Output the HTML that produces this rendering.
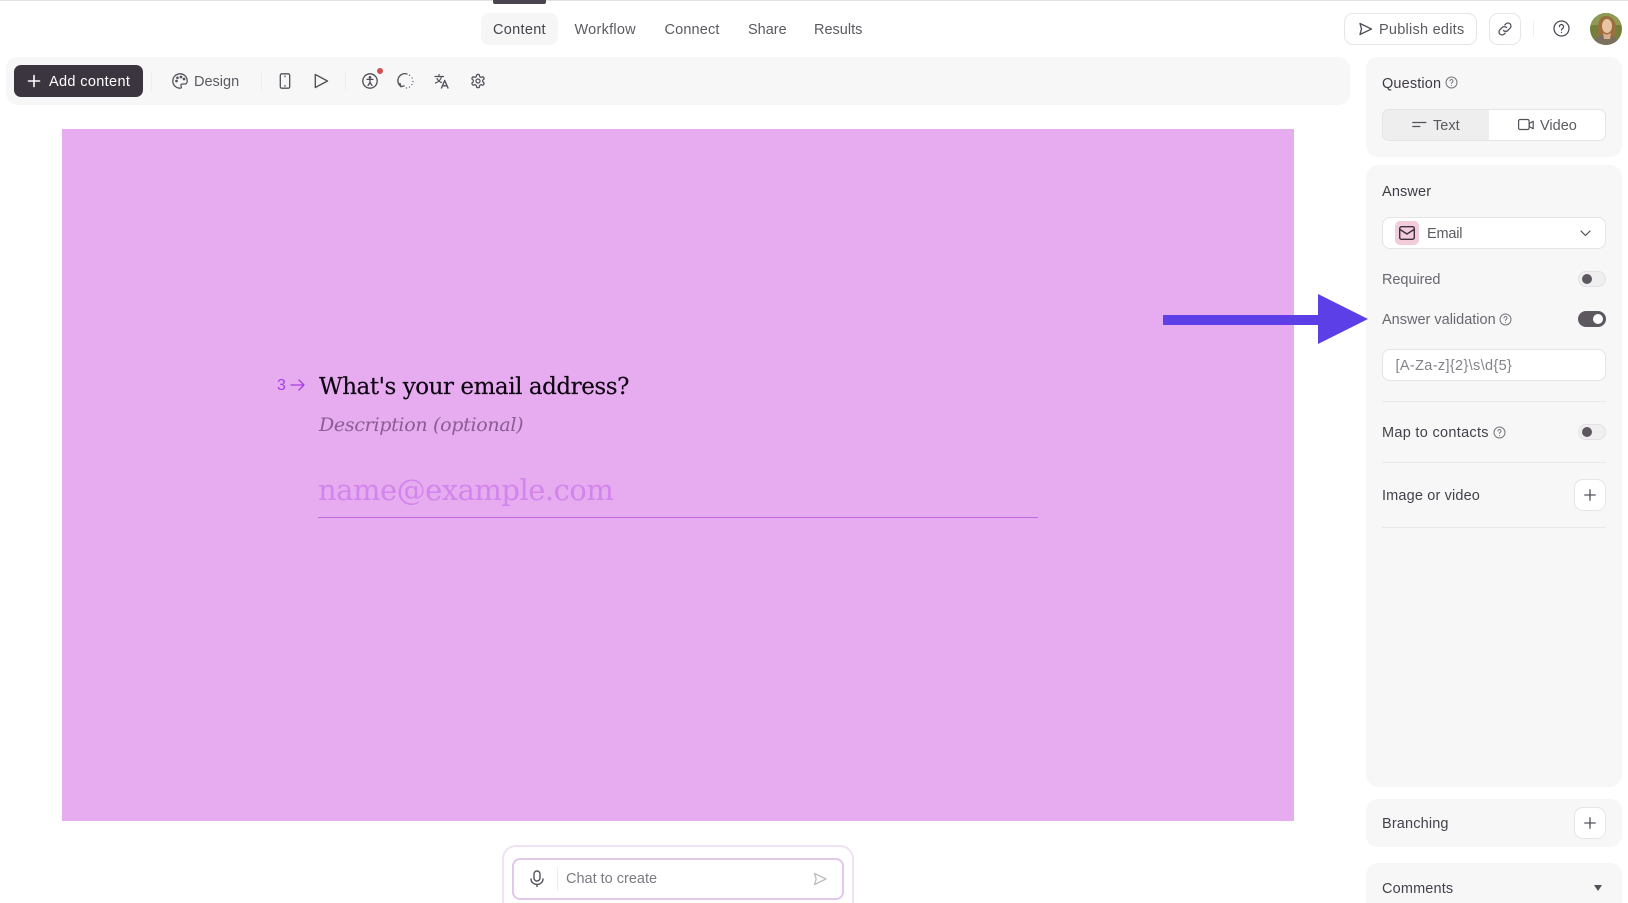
<!DOCTYPE html>
<html><head><meta charset="utf-8">
<style>
html{margin:0;padding:0;background:#fff;width:1628px;height:903px;overflow:hidden}
body{margin:0;padding:0;background:#fff;width:1628px;height:903px;position:relative;overflow:hidden;font-family:"Liberation Sans",sans-serif;color:#4a4650}
.a{position:absolute}
.t{position:absolute;white-space:nowrap;line-height:20px;font-size:14.5px;margin-top:1px}
svg{position:absolute;overflow:visible;fill:none}
.panel{position:absolute;background:#f7f7f8;border-radius:12px}
.sep{position:absolute;width:1px;height:20px;background:#eeeeef}
.hr{position:absolute;left:1382px;width:224px;height:1px;background:#e8e8ea}
.tog{position:absolute;left:1578px;width:28px;height:16px;border-radius:8px;box-sizing:border-box;background:#efeff0;border:1px solid #e2e2e4}
.tog i{position:absolute;left:3px;top:2px;width:10px;height:10px;border-radius:50%;background:#5d5860}
.btn{position:absolute;left:1574px;width:32px;height:32px;box-sizing:border-box;border:1px solid #e6e6e8;border-radius:9px;background:#fff}
.s{letter-spacing:.15px}
</style></head><body>
<div class="a" style="left:0;top:0;width:1628px;height:1px;background:#dfe3e3"></div>
<div class="a" style="left:493px;top:0;width:53px;height:4px;background:#4a4450;border-radius:0 0 2px 2px"></div>
<div class="a" style="left:481px;top:13px;width:77px;height:32px;background:#f6f6f7;border-radius:8px"></div>
<div class="t" style="left:493px;top:19px;color:#47434c;letter-spacing:.3px">Content</div>
<div class="t" style="left:574.5px;top:19px;color:#5c5960;letter-spacing:.25px">Workflow</div>
<div class="t" style="left:664.500px;top:19px;color:#5c5960;letter-spacing:.15px">Connect</div>
<div class="t" style="left:748px;top:19px;color:#5c5960">Share</div>
<div class="t" style="left:814px;top:19px;color:#5c5960">Results</div>

<div class="a" style="left:1344px;top:13px;width:133px;height:32px;box-sizing:border-box;border:1px solid #e6e6e8;border-radius:9px"></div>
<svg style="left:1358px;top:22px" width="15" height="14" stroke="#55515a" stroke-width="1.400" stroke-linejoin="round"><path d="M2 1.500L13.500 7 2 12.500 3.500 7z"/></svg>
<div class="t" style="left:1379px;top:19px;color:#5c5960;letter-spacing:.25px">Publish edits</div>
<div class="a" style="left:1489px;top:13px;width:32px;height:32px;box-sizing:border-box;border:1px solid #e6e6e8;border-radius:9px"></div>
<svg style="left:1497px;top:21px" width="16" height="16" stroke="#55515a" stroke-width="1.300" stroke-linecap="round"><path d="M6.500 9.500a3 3 0 0 0 4.300 0l2.300-2.300a3 3 0 0 0-4.300-4.300L7.800 3.900M9.500 6.500a3 3 0 0 0-4.300 0L2.900 8.800a3 3 0 0 0 4.300 4.300l1-1"/></svg>
<div class="sep" style="left:1533px;top:21px;height:16px"></div>
<svg style="left:1553px;top:20px" width="17" height="17" stroke="#4f4b54" stroke-width="1.300" stroke-linecap="round"><circle cx="8.500" cy="8.500" r="7.500"/><path d="M6.400 6.600a2.100 2.100 0 1 1 3.200 1.800c-.7.400-1.100.8-1.100 1.600M8.500 12.400v.1"/></svg>
<svg style="left:1590px;top:13px" width="32" height="32" viewBox="0 0 32 32"><defs><clipPath id="c"><circle cx="16" cy="16" r="16"/></clipPath></defs><g clip-path="url(#c)"><rect width="32" height="32" fill="#74803a"/><path d="M0 0h32v12H0z" fill="#8f9a55"/><path d="M8 28V13Q9 3 16 3q8 0 10 10v15z" fill="#9a6f3c"/><ellipse cx="17" cy="13" rx="5" ry="7" fill="#e9c4a2"/><path d="M3 32q1-10 13-11 12 1 13 11z" fill="#7d6f5e"/><path d="M13 20q4 3 8 0l-1 6h-6z" fill="#dcae8a"/></g></svg>

<div class="panel" style="left:6px;top:57px;width:1344px;height:48px"></div>
<div class="a" style="left:14px;top:65px;width:129px;height:32px;background:#3b3540;border-radius:7px"></div>
<svg style="left:27px;top:74px" width="14" height="14" stroke="#fff" stroke-width="1.600" stroke-linecap="round"><path d="M7 1.500v11M1.500 7h11"/></svg>
<div class="t" style="left:49px;top:71px;color:#fff;letter-spacing:.35px">Add content</div>
<div class="sep" style="left:151px;top:71px"></div>
<svg style="left:172px;top:73px" width="16" height="16" stroke="#55515a" stroke-width="1.300"><path d="M8 .8a7.200 7.200 0 1 0 0 14.400c1.500 0 1.600-1.200 1.100-2-.6-1 0-2.200 1.300-2.200h2.300c1.400 0 2.500-1 2.500-2.800C15.200 3.800 12 .8 8 .8z"/><circle cx="4.500" cy="8" r=".7"/><circle cx="5.500" cy="4.800" r=".7"/><circle cx="9" cy="4" r=".7"/><circle cx="12" cy="6" r=".7"/></svg>
<div class="t" style="left:194px;top:71px;color:#5c5960">Design</div>
<div class="sep" style="left:261px;top:71px"></div>
<svg style="left:277px;top:73px" width="16" height="16" stroke="#55515a" stroke-width="1.300"><rect x="3.300" y=".8" width="9.400" height="14.400" rx="1.500"/><path d="M8 3v.6M8 12.500v.6" stroke-linecap="round"/></svg>
<svg style="left:313px;top:73px" width="16" height="16" stroke="#55515a" stroke-width="1.400" stroke-linejoin="round"><path d="M2.300 1.500v13L14.500 8z"/></svg>
<div class="sep" style="left:345px;top:71px"></div>
<svg style="left:362px;top:73px" width="16" height="16" stroke="#4f4b54" stroke-width="1.300" stroke-linecap="round"><circle cx="8" cy="8" r="7.200"/><circle cx="8" cy="4.400" r=".7" fill="#4f4b54"/><path d="M5 6.400h6M8 6.500v3M8 9.500l-2 3M8 9.500l2 3"/></svg>
<div class="a" style="left:377px;top:68px;width:6px;height:6px;border-radius:50%;background:#d0524f"></div>
<svg style="left:398px;top:73px" width="16" height="16" stroke="#55515a" stroke-width="1.300" stroke-linecap="round"><path d="M3 13.500A7 7 0 0 1 9 1"/><path d="M11.500 2.200l.1.1M14 5l.1.1M15 8.500v.1M14 11.500l-.1.100M11.500 14l-.1.100M8.500 15h-.1" stroke-width="1.200"/><path d="M2 10.500l1 3.200 3.200-.8"/></svg>
<svg style="left:434px;top:73px" width="16" height="16" stroke="#55515a" stroke-width="1.200" stroke-linecap="round" stroke-linejoin="round"><path d="M1 3.500h8.500M5 1.500v2M7.500 3.500C7 6.500 4.500 9 1.500 10M3 5.500c1 2 3 3.500 4.500 4"/><path d="M7.500 15l3.200-7.500 3.300 7.500M8.700 12.800h4.200" stroke-width="1.400"/></svg>
<svg style="left:470px;top:73px" width="16" height="16" viewBox="0 0 24 24" stroke="#55515a" stroke-width="1.900" stroke-linejoin="round"><path d="M12.220 2h-.44a2 2 0 0 0-2 2v.18a2 2 0 0 1-1 1.730l-.43.250a2 2 0 0 1-2 0l-.15-.08a2 2 0 0 0-2.730.730l-.22.380a2 2 0 0 0 .730 2.730l.15.100a2 2 0 0 1 1 1.720v.510a2 2 0 0 1-1 1.740l-.15.090a2 2 0 0 0-.730 2.730l.22.380a2 2 0 0 0 2.730.730l.15-.08a2 2 0 0 1 2 0l.43.250a2 2 0 0 1 1 1.730V20a2 2 0 0 0 2 2h.44a2 2 0 0 0 2-2v-.18a2 2 0 0 1 1-1.730l.43-.25a2 2 0 0 1 2 0l.15.08a2 2 0 0 0 2.730-.73l.22-.39a2 2 0 0 0-.73-2.730l-.15-.08a2 2 0 0 1-1-1.740v-.5a2 2 0 0 1 1-1.740l.15-.09a2 2 0 0 0 .73-2.730l-.22-.38a2 2 0 0 0-2.730-.73l-.15.08a2 2 0 0 1-2 0l-.43-.25a2 2 0 0 1-1-1.730V4a2 2 0 0 0-2-2z"/><circle cx="12" cy="12" r="3"/></svg>

<div class="a" style="left:62px;top:128.500px;width:1231.500px;height:692.500px;background:#e7abef"></div>
<div class="t" style="left:277px;top:375px;font-size:16px;color:#a340e0">3</div>
<svg style="left:290px;top:378px" width="16" height="14" stroke="#a340e0" stroke-width="1.300" stroke-linecap="round" stroke-linejoin="round"><path d="M1 7h13M9 2l5 5-5 5"/></svg>
<div class="t" style="left:319px;top:370px;line-height:32px;font-family:'DejaVu Serif',serif;font-size:23px;color:#0b0410;-webkit-text-stroke:.15px #0b0410;letter-spacing:-.45px">What's your email address?</div>
<div class="t" style="left:319px;top:411px;line-height:26px;font-family:'DejaVu Serif',serif;font-style:italic;font-size:19px;color:#8a5c93;letter-spacing:-.3px">Description (optional)</div>
<div class="t" style="left:318px;top:469px;line-height:40px;font-family:'DejaVu Serif',serif;font-size:29px;color:#d285ec;letter-spacing:-.5px">name@example.com</div>
<div class="a" style="left:318px;top:517px;width:720px;height:1px;background:#c06ce2"></div>

<div class="a" style="left:502px;top:845px;width:352px;height:80px;box-sizing:border-box;border:2px solid #f0e2f4;border-radius:14px"></div>
<div class="a" style="left:512px;top:858px;width:332px;height:42px;box-sizing:border-box;border:2px solid #e2c8ea;border-radius:8px;background:#fff"></div>
<svg style="left:529px;top:870px" width="16" height="18" stroke="#55515a" stroke-width="1.400" stroke-linecap="round"><rect x="5" y="1" width="6" height="10" rx="3"/><path d="M2 9a6 5.500 0 0 0 12 0M8 14.500v2"/></svg>
<div class="a" style="left:557px;top:867px;width:1px;height:24px;background:#ececee"></div>
<div class="t" style="left:566px;top:868px;color:#7d7a82">Chat to create</div>
<svg style="left:813px;top:872px" width="14" height="14" stroke="#bdbcc0" stroke-width="1.300" stroke-linejoin="round"><path d="M1.500 1.500L13 7 1.500 12.500 3.200 7z"/></svg>

<div class="panel" style="left:1366px;top:57px;width:256px;height:100px"></div>
<div class="t s" style="left:1382px;top:73px;color:#3f3b44">Question</div>
<svg style="left:1445px;top:76px" width="13" height="13" stroke="#77747c" stroke-width="1" stroke-linecap="round"><circle cx="6.500" cy="6.500" r="5.500"/><path d="M5 5a1.500 1.500 0 1 1 2.300 1.300c-.5.300-.8.600-.8 1.200M6.500 9.500v.1"/></svg>
<div class="a" style="left:1382px;top:109px;width:224px;height:32px;box-sizing:border-box;border:1px solid #e4e4e6;border-radius:7px;background:#fff;overflow:hidden"><div style="width:106px;height:32px;background:#eeeeef"></div></div>
<svg style="left:1412px;top:119px" width="14" height="12" stroke="#55515a" stroke-width="1.300" stroke-linecap="round"><path d="M.8 3.500h13M.8 7.500h7"/></svg>
<div class="t" style="left:1433px;top:115px;color:#5c5960">Text</div>
<svg style="left:1518px;top:118px" width="16" height="14" stroke="#55515a" stroke-width="1.200" stroke-linejoin="round"><rect x=".6" y="1.500" width="10.500" height="10" rx="1.500"/><path d="M11.200 5.500l4-2.200v7.400l-4-2.200z"/></svg>
<div class="t" style="left:1540px;top:115px;color:#5c5960">Video</div>

<div class="panel" style="left:1366px;top:165px;width:256px;height:622px"></div>
<div class="t s" style="left:1382px;top:181px;color:#3f3b44">Answer</div>
<div class="a" style="left:1382px;top:217px;width:224px;height:32px;box-sizing:border-box;border:1px solid #e4e4e6;border-radius:8px;background:#fff"></div>
<div class="a" style="left:1395px;top:221px;width:24px;height:24px;border-radius:5px;background:#f3ccdc"></div>
<svg style="left:1399px;top:226px" width="16" height="14" stroke="#3d3040" stroke-width="1.400" stroke-linejoin="round"><rect x=".7" y=".7" width="14.600" height="12.600" rx="1.800"/><path d="M1 3.500l7 4.500 7-4.500"/></svg>
<div class="t" style="left:1427px;top:223px;color:#5c5960;letter-spacing:-.2px">Email</div>
<svg style="left:1580px;top:230px" width="11" height="7" stroke="#4f4b54" stroke-width="1.200" stroke-linecap="round" stroke-linejoin="round"><path d="M1 1l4.500 4.500L10 1"/></svg>
<div class="t" style="left:1382px;top:269px;color:#6a676f;letter-spacing:-.05px">Required</div>
<div class="tog" style="top:271px"><i></i></div>
<div class="t" style="left:1382px;top:309px;color:#6a676f">Answer validation</div>
<svg style="left:1499px;top:313px" width="13" height="13" stroke="#77747c" stroke-width="1" stroke-linecap="round"><circle cx="6.500" cy="6.500" r="5.500"/><path d="M5 5a1.500 1.500 0 1 1 2.300 1.300c-.5.300-.8.600-.8 1.200M6.500 9.500v.1"/></svg>
<div class="a" style="left:1578px;top:311px;width:28px;height:16px;border-radius:8px;background:#5d5860"><i style="position:absolute;right:3px;top:3px;width:10px;height:10px;border-radius:50%;background:#fff"></i></div>
<div class="a" style="left:1382px;top:349px;width:224px;height:32px;box-sizing:border-box;border:1px solid #e4e4e6;border-radius:8px;background:#fff"></div>
<div class="t" style="left:1395.500px;top:355px;font-size:14.500px;letter-spacing:.35px;color:#85828a">[A-Za-z]{2}\s\d{5}</div>
<div class="hr" style="top:401px"></div>
<div class="t" style="left:1382px;top:422px;color:#45414a;letter-spacing:.3px">Map to contacts</div>
<svg style="left:1493px;top:426px" width="13" height="13" stroke="#77747c" stroke-width="1" stroke-linecap="round"><circle cx="6.500" cy="6.500" r="5.500"/><path d="M5 5a1.500 1.500 0 1 1 2.300 1.300c-.5.300-.8.600-.8 1.200M6.500 9.500v.1"/></svg>
<div class="tog" style="top:424px"><i></i></div>
<div class="hr" style="top:462px"></div>
<div class="t s" style="left:1382px;top:485px;color:#45414a">Image or video</div>
<div class="btn" style="top:479px"></div>
<svg style="left:1584px;top:489px" width="12" height="12" stroke="#55515a" stroke-width="1.300" stroke-linecap="round"><path d="M6 .8v10.400M.8 6h10.400"/></svg>
<div class="hr" style="top:527px"></div>

<div class="panel" style="left:1366px;top:799px;width:256px;height:48px"></div>
<div class="t s" style="left:1382px;top:813px;color:#45414a">Branching</div>
<div class="btn" style="top:807px"></div>
<svg style="left:1584px;top:817px" width="12" height="12" stroke="#55515a" stroke-width="1.300" stroke-linecap="round"><path d="M6 .8v10.400M.8 6h10.400"/></svg>
<div class="panel" style="left:1366px;top:863px;width:256px;height:60px"></div>
<div class="t s" style="left:1382px;top:878px;color:#45414a">Comments</div>
<svg style="left:1593px;top:884px" width="10" height="8"><path d="M1 1h8L5 7z" fill="#55515a"/></svg>

<svg style="left:1163px;top:294px" width="207" height="50"><path d="M0 21h155V0l50 25-50 25V31H0z" fill="#5c3fe6"/></svg>
</body></html>
